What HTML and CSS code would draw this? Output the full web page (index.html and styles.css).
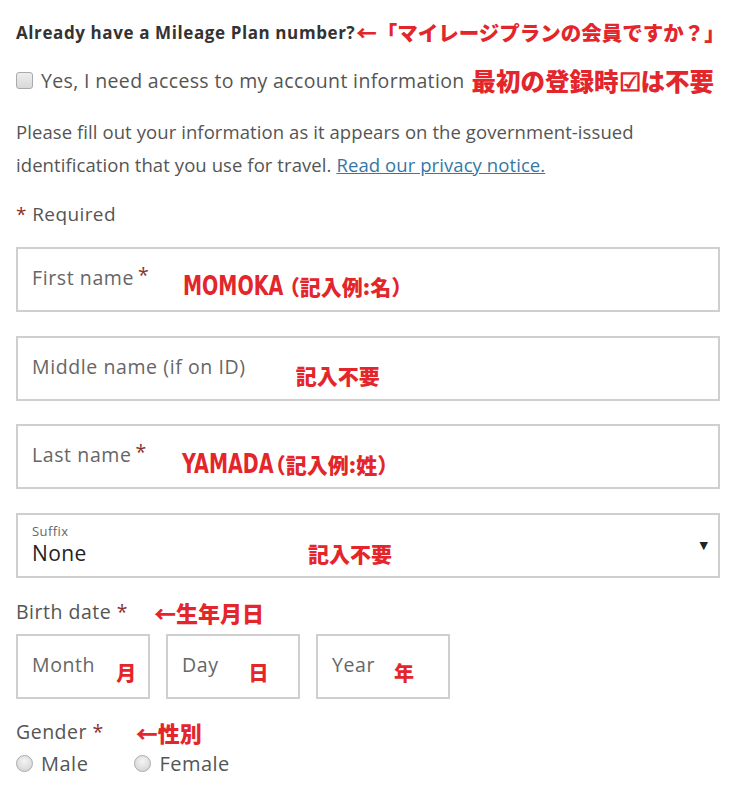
FILE: index.html
```html
<!DOCTYPE html>
<html lang="en">
<head>
<meta charset="utf-8">
<title>Mileage Plan form</title>
<link rel="stylesheet" href="styles.css">
</head>
<body>
<main class="form">
  <div class="row-head">
    <h2 class="heading">Already have a Mileage Plan number?</h2>
    <span class="note note-top">←「マイレージプランの会員ですか？」</span>
  </div>
  <div class="row-check">
    <span class="checkbox"></span>
    <span class="check-label">Yes, I need access to my account information</span>
    <span class="note note-check">最初の登録時☑は不要</span>
  </div>
  <p class="intro">Please fill out your information as it appears on the government-issued identification that you use for travel. <a href="#" class="link">Read our privacy notice.</a></p>
  <p class="required"><span class="star">*</span> Required</p>

  <div class="field">
    <span class="ph">First name<span class="star star-up">*</span></span>
    <span class="note note-box note-first"><span class="narrow">MOMOKA</span>（記入例:名）</span>
  </div>
  <div class="field">
    <span class="ph">Middle name (if on ID)</span>
    <span class="note note-box note-middle">記入不要</span>
  </div>
  <div class="field">
    <span class="ph">Last name<span class="star star-up">*</span></span>
    <span class="note note-box note-last"><span class="narrow">YAMADA</span>（記入例:姓）</span>
  </div>
  <div class="field field-select">
    <div class="select-col">
      <span class="select-label">Suffix</span>
      <span class="select-value">None</span>
    </div>
    <span class="note note-box note-suffix">記入不要</span>
    <span class="caret">▼</span>
  </div>

  <div class="label-row label-birth">
    <span class="label">Birth date <span class="star">*</span></span>
    <span class="note note-birth">←生年月日</span>
  </div>
  <div class="date-row">
    <div class="date-box"><span class="ph">Month</span><span class="note note-date note-month">月</span></div>
    <div class="date-box"><span class="ph">Day</span><span class="note note-date note-day">日</span></div>
    <div class="date-box"><span class="ph">Year</span><span class="note note-date note-year">年</span></div>
  </div>

  <div class="label-row label-gender">
    <span class="label">Gender <span class="star">*</span></span>
    <span class="note note-gender">←性別</span>
  </div>
  <div class="radio-row">
    <span class="radio-item"><span class="radio"></span>Male</span>
    <span class="radio-item"><span class="radio"></span>Female</span>
  </div>
</main>
</body>
</html>
```
FILE: styles.css
```css
html, body {
  margin: 0;
  padding: 0;
  background: #fff;
}
body {
  font-family: "Open Sans", "Noto Sans", sans-serif;
  color: #555;
}
.form {
  width: 704px;
  padding: 18px 0 0 16px;
}
.note {
  font-family: "Noto Sans CJK JP", sans-serif;
  font-weight: 900;
  color: #e3262b;
  white-space: nowrap;
}
.narrow {
  display: inline-block;
  font-family: "DejaVu Sans", sans-serif;
  font-weight: 700;
  font-size: 27px;
  transform: scaleX(0.71);
  transform-origin: left center;
  margin-right: -46px;
}
.row-head {
  display: flex;
  align-items: center;
  height: 28px;
  white-space: nowrap;
}
.heading {
  margin: 0;
  flex-shrink: 0;
  white-space: nowrap;
  font-size: 17px;
  font-weight: 700;
  color: #333;
  letter-spacing: 0.6px;
}
.note-top {
  font-size: 20.5px;
  margin-left: 1px;
}
.row-check {
  display: flex;
  align-items: center;
  margin-top: 20px;
  height: 28px;
  white-space: nowrap;
}
.checkbox {
  flex-shrink: 0;
  width: 15px;
  height: 15px;
  border: 1px solid #aaa;
  border-radius: 3px;
  background: linear-gradient(#eee, #d8d8d8);
  margin-right: 8px;
}
.check-label {
  font-size: 19.5px;
  letter-spacing: 0.35px;
}
.note-check {
  font-size: 24.5px;
  margin-left: 7px;
}
.intro {
  margin: 21px 0 0;
  font-size: 18.5px;
  line-height: 33px;
  letter-spacing: 0.08px;
  width: 700px;
}
.link {
  color: #3577a6;
  text-decoration: underline;
}
.required {
  margin: 20px 0 0;
  font-size: 19px;
  line-height: 26px;
  letter-spacing: 0.4px;
}
.star {
  color: #8c2f2f;
}
.star-up {
  position: relative;
  top: -3px;
  margin-left: 4px;
}
.field {
  box-sizing: border-box;
  height: 65px;
  border: 2px solid #cfcfcf;
  display: flex;
  align-items: center;
  padding: 0 10px 0 14px;
  margin-top: 20px;
}
.field + .field {
  margin-top: 23.5px;
}
.ph {
  font-size: 19.5px;
  letter-spacing: 0.6px;
  color: #666;
  position: relative;
  top: -2px;
}
.note-box {
  font-size: 21px;
}
.note-first { margin-left: 34px; position: relative; top: 6px; }
.note-middle { margin-left: 50px; position: relative; top: 7px; }
.note-last { margin-left: 35px; position: relative; top: 7px; }
.field-select {
  align-items: stretch;
}
.select-col {
  display: flex;
  flex-direction: column;
  justify-content: center;
  width: 276px;
}
.select-label {
  font-size: 13px;
  letter-spacing: 0.4px;
  color: #666;
  line-height: 16px;
}
.select-value {
  font-size: 21px;
  letter-spacing: 0.4px;
  color: #222;
  line-height: 28px;
}
.note-suffix {
  align-self: center;
  position: relative;
  top: 8px;
}
.caret {
  margin-left: auto;
  align-self: center;
  font-size: 11px;
  color: #222;
  font-family: "DejaVu Sans", sans-serif;
}
.label-row {
  display: flex;
  align-items: center;
  height: 28px;
}
.label-birth { margin-top: 20px; }
.label {
  font-size: 19.5px;
  letter-spacing: 0.5px;
}
.note-birth {
  font-size: 22px;
  margin-left: 26px;
}
.date-row {
  display: flex;
  gap: 16px;
  margin-top: 8px;
}
.date-box {
  box-sizing: border-box;
  width: 134px;
  height: 65px;
  border: 2px solid #cfcfcf;
  display: flex;
  align-items: center;
  padding: 0 14px;
}
.note-date {
  font-size: 20px;
  position: relative;
  top: 6px;
}
.note-month { margin-left: 21px; }
.note-day { margin-left: 30px; }
.note-year { margin-left: 19px; }
.label-gender { margin-top: 19px; }
.note-gender {
  font-size: 22px;
  margin-left: 32px;
}
.radio-row {
  display: flex;
  gap: 46px;
  margin-top: 4px;
}
.radio-item {
  display: flex;
  align-items: center;
  font-size: 20px;
  letter-spacing: 0.5px;
}
.radio {
  width: 17px;
  height: 17px;
  border-radius: 50%;
  border: 1px solid #aaa;
  background: radial-gradient(circle at 50% 35%, #f4f4f4, #cfcfcf);
  margin-right: 8px;
  box-sizing: border-box;
}
```
